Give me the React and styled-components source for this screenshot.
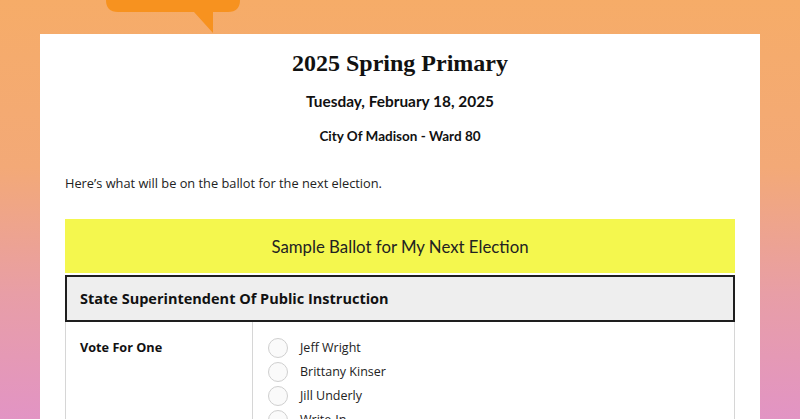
import React from 'react';
import styled, { createGlobalStyle } from 'styled-components';

const Global = createGlobalStyle`
  html, body {
    margin: 0;
    padding: 0;
    height: 100%;
    overflow: hidden;
  }
  body {
    background: linear-gradient(to bottom, #f6ac68 0%, #f3a977 40%, #e89ea6 70%, #e294c4 100%);
    font-family: "Open Sans", "Liberation Sans", sans-serif;
    color: #111;
  }
`;

const Page = styled.div`
  position: relative;
  height: 419px;
  padding-top: 34px;
  box-sizing: border-box;
`;

const Bubble = styled.svg`
  position: absolute;
  left: 106px;
  top: 0;
`;

const Card = styled.div`
  margin: 0 40px;
  background: #fff;
  height: 400px;
  padding: 14px 25px 0;
  box-sizing: border-box;
`;

const Title = styled.h1`
  margin: 0;
  text-align: center;
  font-family: "Liberation Serif", "DejaVu Serif", serif;
  font-weight: bold;
  font-size: 24px;
  line-height: 30px;
`;

const DateLine = styled.h2`
  margin: 13px 0 0;
  text-align: center;
  font-family: Lato, "Noto Sans", sans-serif;
  font-weight: bold;
  font-size: 15.4px;
  line-height: 20px;
`;

const Place = styled.h3`
  margin: 17px 0 0;
  text-align: center;
  font-family: Lato, "Noto Sans", sans-serif;
  font-weight: bold;
  font-size: 13.5px;
  line-height: 16px;
`;

const Intro = styled.p`
  margin: 30px 0 0;
  font-size: 12.8px;
  line-height: 18px;
  color: #222;
`;

const Banner = styled.div`
  margin-top: 27px;
  height: 54px;
  background: #f4f74e;
  display: flex;
  align-items: center;
  justify-content: center;
  font-family: Lato, "Noto Sans", sans-serif;
  font-size: 16.8px;
  color: #222;
`;

const RaceHeader = styled.div`
  margin-top: 2px;
  height: 47px;
  box-sizing: border-box;
  border: 2px solid #1e1e1e;
  background: #eeeeee;
  display: flex;
  align-items: center;
  padding-left: 13px;
  font-weight: bold;
  font-size: 14.5px;
`;

const Row = styled.div`
  display: grid;
  grid-template-columns: 187px 1fr;
  border-left: 1px solid #d6d6d6;
  border-right: 1px solid #d6d6d6;
  height: 120px;
`;

const Label = styled.div`
  border-right: 1px solid #d6d6d6;
  padding: 16px 0 0 14px;
  font-weight: bold;
  font-size: 12.7px;
`;

const Options = styled.div`
  padding: 16px 0 0 15px;
  display: flex;
  flex-direction: column;
  gap: 5px;
`;

const Option = styled.label`
  display: flex;
  align-items: center;
  gap: 12px;
  font-size: 12.5px;
  color: #222;
  height: 19px;
`;

const Radio = styled.span`
  width: 18px;
  height: 18px;
  border-radius: 50%;
  border: 1px solid #cfcfcf;
  background: #fafafa;
  flex-shrink: 0;
`;

const candidates = ['Jeff Wright', 'Brittany Kinser', 'Jill Underly', 'Write-In'];

export default function App() {
  return (
    <Page>
      <Global />
      <Bubble width="136" height="34" viewBox="0 0 136 34">
        <path
          d="M0 -20 H134 V0 Q134 12 122 12 H107 V33 L88 12 H12 Q0 12 0 0 Z"
          fill="#f7921f"
        />
      </Bubble>
      <Card>
        <Title>2025 Spring Primary</Title>
        <DateLine>Tuesday, February 18, 2025</DateLine>
        <Place>City Of Madison - Ward 80</Place>
        <Intro>Here’s what will be on the ballot for the next election.</Intro>
        <Banner>Sample Ballot for My Next Election</Banner>
        <RaceHeader>State Superintendent Of Public Instruction</RaceHeader>
        <Row>
          <Label>Vote For One</Label>
          <Options>
            {candidates.map((c) => (
              <Option key={c}>
                <Radio />
                {c}
              </Option>
            ))}
          </Options>
        </Row>
      </Card>
    </Page>
  );
}
